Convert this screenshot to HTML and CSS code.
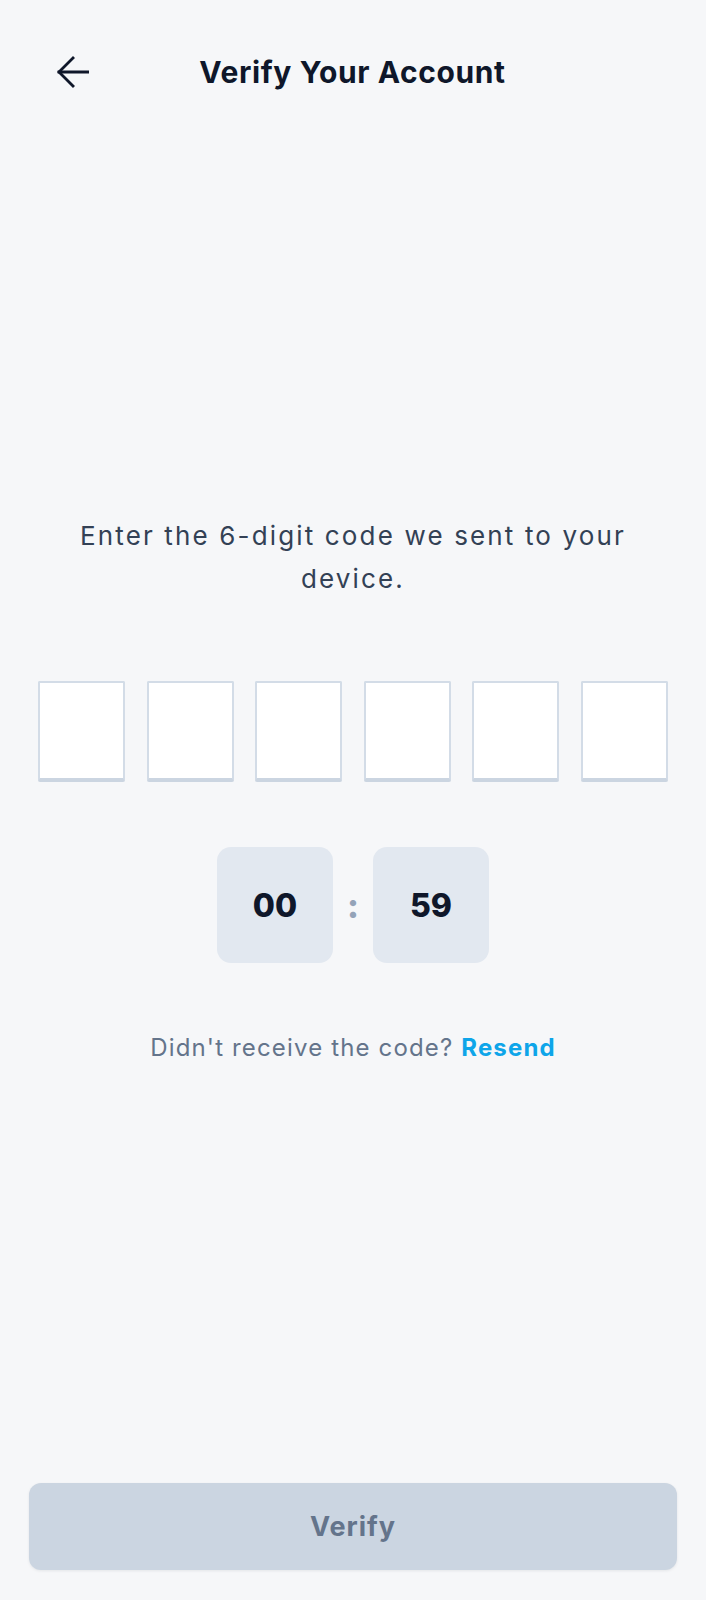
FILE: index.html
```html
<!DOCTYPE html>
<html lang="en">
<head>
<meta charset="utf-8">
<title>Verify Your Account</title>
<link rel="stylesheet" href="styles.css">
</head>
<body>
<div class="screen">
  <header class="topbar">
    <button class="back" aria-label="Back">
      <svg width="32" height="32" viewBox="0 0 32 32" fill="none" stroke="#0f172a" stroke-width="2.8" stroke-linecap="square" stroke-linejoin="miter">
        <path d="M2 16H31"/>
        <path d="M16 2L2 16L16 30"/>
      </svg>
    </button>
    <h1 class="title">Verify Your Account</h1>
    <span class="spacer"></span>
  </header>

  <main class="content">
    <p class="intro">Enter the 6-digit code we sent to your device.</p>

    <div class="otp">
      <div class="otp-box"></div>
      <div class="otp-box"></div>
      <div class="otp-box"></div>
      <div class="otp-box"></div>
      <div class="otp-box"></div>
      <div class="otp-box"></div>
    </div>

    <div class="timer">
      <div class="timer-box">00</div>
      <span class="timer-sep">:</span>
      <div class="timer-box">59</div>
    </div>

    <p class="resend">Didn't receive the code? <a class="resend-link" href="#">Resend</a></p>
  </main>

  <footer class="actions">
    <button class="verify">Verify</button>
  </footer>
</div>
</body>
</html>
```

FILE: styles.css
```css
* { box-sizing: border-box; }

html, body {
  margin: 0;
  padding: 0;
  background: #f6f7f9;
}

body {
  font-family: Inter, "Noto Sans", "Liberation Sans", sans-serif;
  color: #0f172a;
}

.screen {
  width: 706px;
  height: 1600px;
  display: flex;
  flex-direction: column;
}

.topbar {
  height: 144px;
  display: grid;
  grid-template-columns: 1fr auto 1fr;
  align-items: center;
  padding: 0 0 0 57px;
}

.back {
  justify-self: start;
  width: 32px;
  height: 32px;
  padding: 0;
  border: 0;
  background: none;
  display: flex;
  align-items: center;
  justify-content: center;
}

.title {
  margin: 0;
  font-size: 30px;
  font-weight: 700;
  letter-spacing: 0.6px;
  color: #0f172a;
  transform: translateX(-29px);
}

.content {
  flex: 1;
  display: flex;
  flex-direction: column;
  align-items: center;
  padding-top: 370px;
}

.intro {
  margin: 0;
  width: 610px;
  text-align: center;
  font-size: 26px;
  line-height: 43px;
  letter-spacing: 2.15px;
  color: #334155;
}

.otp {
  margin-top: 81px;
  width: 706px;
  padding: 0 38px;
  display: flex;
  justify-content: space-between;
}

.otp-box {
  width: 87px;
  height: 101px;
  background: #ffffff;
  border: 2px solid #d3dce7;
  border-bottom: 4px solid #cbd5e1;
  border-radius: 2px;
}

.timer {
  margin-top: 65px;
  display: flex;
  align-items: center;
  gap: 12px;
}

.timer-box {
  width: 116px;
  height: 116px;
  border-radius: 14px;
  background: #e2e8f0;
  display: flex;
  align-items: center;
  justify-content: center;
  font-size: 32px;
  font-weight: 800;
  color: #0f172a;
}

.timer-sep {
  width: 16px;
  text-align: center;
  font-size: 34px;
  font-weight: 800;
  color: #94a3b8;
}

.resend {
  margin: 68px 0 0;
  font-size: 24px;
  line-height: 34px;
  letter-spacing: 1.15px;
  color: #64748b;
}

.resend-link {
  color: #0ea5e9;
  font-weight: 700;
  text-decoration: none;
}

.actions {
  padding: 0 29px 30px;
}

.verify {
  width: 100%;
  height: 87px;
  border: 0;
  border-radius: 12px;
  background: #cbd5e1;
  box-shadow: 0 1px 3px rgba(15, 23, 42, 0.08);
  font-family: inherit;
  font-size: 27px;
  font-weight: 700;
  letter-spacing: 1px;
  color: #64748b;
}
```
